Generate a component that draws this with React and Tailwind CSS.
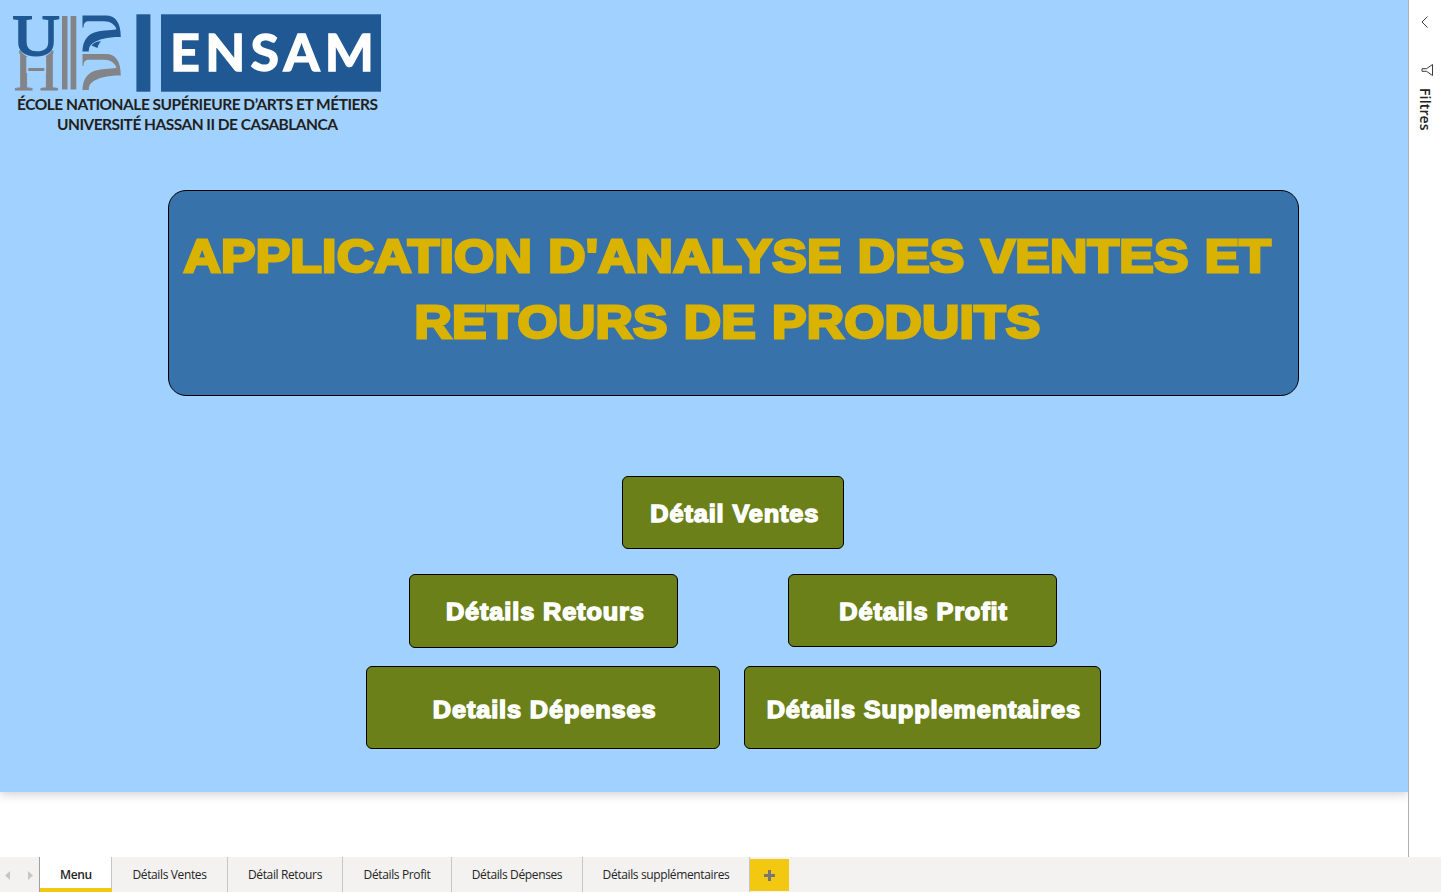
const ribbon =
  'M82.500 15.500 H106 C115 15.500 120.800 22 120.800 37 C108 36.800 98 39.500 93 43 C89.500 45.500 88.800 48 88.800 51.500 H82.500 C82.500 43 86 36 93 33 C101 29.800 110 30.500 116.500 29.200 C115 24.500 110.500 21.200 104 21.200 H88.500 C85 21.200 83.500 23.500 83.500 27.500 H82.500 Z';

function Logo() {
  return (
    <svg width="369" height="120" viewBox="13 14 369 120" role="img" aria-label="ENSAM">
      <defs>
        <clipPath id="lowerH">
          <path d="M13 80 H19.200 V49 Q24 58 36 58 Q48 58 53.300 49 V80 H60 V92 H13 Z" />
        </clipPath>
      </defs>
      <g clipPath="url(#lowerH)">
        <text x="13.500" y="89.500" textLength="46" lengthAdjust="spacingAndGlyphs" stroke="#838488" strokeWidth="0.800" className="fill-[#838488] font-['Liberation_Serif',serif] text-[60px]">H</text>
        <rect x="26.300" y="57" width="19.800" height="16" fill="#a0d1ff" />
        <rect x="28.300" y="68" width="16" height="3" fill="#838488" />
      </g>
      <text x="12.500" y="54.600" textLength="47" lengthAdjust="spacingAndGlyphs" stroke="#1f5893" strokeWidth="2" className="fill-[#1f5893] font-['Liberation_Serif',serif] text-[58px]">U</text>
      <g fill="#838488">
        <rect x="62" y="16" width="5.500" height="73.500" />
        <rect x="70.600" y="16" width="5.700" height="73.500" />
        <path d={ribbon} transform="translate(0 38.600)" />
      </g>
      <g fill="#1f5893">
        <path d={ribbon} />
        <path d="M91.500 45.500 C94 42.500 97 41.500 101 41.300 C99 43.500 98 45.500 97.500 48 Z" />
        <rect x="136.400" y="14.300" width="14" height="77.400" />
        <rect x="161" y="14.300" width="220" height="77.400" />
      </g>
      <text x="170" y="71" textLength="204" stroke="white" strokeWidth="1.400" className="fill-white font-[Lato,sans-serif] text-[52px] font-bold">ENSAM</text>
      <text x="17" y="110" textLength="361" className="fill-[#231f20] font-[Lato,sans-serif] text-[15.500px] font-bold">ÉCOLE NATIONALE SUPÉRIEURE D’ARTS ET MÉTIERS</text>
      <text x="57" y="130" textLength="281" className="fill-[#231f20] font-[Lato,sans-serif] text-[15.500px] font-bold">UNIVERSITÉ HASSAN II DE CASABLANCA</text>
    </svg>
  );
}

function NavButton({ label, className }) {
  return (
    <button className={`flex items-center justify-center whitespace-nowrap rounded-md border border-black bg-[#6b8019] pl-[3px] font-['Liberation_Sans',sans-serif] text-[23px] font-bold leading-8 tracking-[0.800px] text-white [-webkit-text-stroke:1.400px_white] ${className}`}>
      <span className="scale-x-110">{label}</span>
    </button>
  );
}

const tabs = [
  { label: 'Détails Ventes', size: 'w-[116px]' },
  { label: 'Détail Retours', size: 'w-[115px]' },
  { label: 'Détails Profit', size: 'w-[109px]' },
  { label: 'Détails Dépenses', size: 'w-[131px]' },
  { label: 'Détails supplémentaires', size: 'w-[167px]' },
];

export default function App() {
  return (
    <div className="flex h-[892px] w-[1441px] flex-col overflow-hidden bg-white font-['Open_Sans',sans-serif] text-[#252423]">
      <div className="flex h-[857px]">
        <div className="w-[1408px] shrink-0 overflow-hidden">
          <main className="flex h-[792px] flex-col bg-[#a0d1ff] shadow-[0_2px_10px_rgba(0,0,0,0.2)]">
            <div className="h-[190px] shrink-0 pl-[13px] pt-[14px]">
              <Logo />
            </div>
            <h1 className="ml-[168px] flex h-[206px] w-[1131px] shrink-0 flex-col items-center whitespace-nowrap rounded-[18px] border border-black bg-[#3872aa] pr-[12px] pt-[32px] font-['Liberation_Sans',sans-serif] text-[47px] font-bold leading-[66px] tracking-[0.150px] text-[#d9b300] [-webkit-text-stroke:2.800px_#d9b300] [word-spacing:1.500px]">
              <span className="scale-x-110">APPLICATION D'ANALYSE DES VENTES ET</span>
              <span className="scale-x-110">RETOURS DE PRODUITS</span>
            </h1>
            <nav className="flex flex-col pt-[80px]">
              <div className="flex pl-[622px]">
                <NavButton label="Détail Ventes" className="h-[73px] w-[222px] pt-[2px]" />
              </div>
              <div className="mt-[25px] flex items-start gap-[110px] pl-[409px]">
                <NavButton label="Détails Retours" className="h-[74px] w-[269px] pt-[2px]" />
                <NavButton label="Détails Profit" className="h-[73px] w-[269px] pt-[2px]" />
              </div>
              <div className="mt-[18px] flex gap-[24px] pl-[366px]">
                <NavButton label="Details Dépenses" className="h-[83px] w-[354px] pt-[4px]" />
                <NavButton label="Détails Supplementaires" className="h-[83px] w-[357px] pt-[4px]" />
              </div>
            </nav>
          </main>
        </div>
        <aside className="flex w-[33px] flex-col items-center border-l border-[#b3b0ad] pt-[16px]">
          <svg width="8" height="12" viewBox="0 0 8 12" fill="none" stroke="#3b3a39" strokeWidth="1">
            <path d="M6.500 .5 L1 6 L6.500 11.500" />
          </svg>
          <svg className="ml-[4px] mt-[36px]" width="12" height="12" viewBox="0 0 12 12" fill="none" stroke="#3b3a39" strokeWidth="1">
            <path d="M11.500 .5 V11.500 L5.500 7.300 H1 V4.700 H5.500 Z" />
          </svg>
          <span className="mt-[12px] text-[14px] font-semibold leading-5 tracking-[0.150px] [writing-mode:vertical-rl]">Filtres</span>
        </aside>
      </div>
      <footer className="flex h-[35px] bg-[#f3f2f1] text-[12px]">
        <div className="flex w-[40px] items-center justify-between border-r border-[#a19f9d] pl-[5px] pr-[6px] pt-[2px]">
          <svg width="5" height="9" viewBox="0 0 5 9" fill="#c8c6c4"><path d="M5 0 V9 L0 4.500 Z" /></svg>
          <svg width="5" height="9" viewBox="0 0 5 9" fill="#c8c6c4"><path d="M0 0 V9 L5 4.500 Z" /></svg>
        </div>
        <div className="flex w-[72px] items-center justify-center border-b-4 border-[#f2c811] bg-white pt-[4px] font-semibold tracking-[-0.350px] shadow-[inset_-1px_0_#c8c6c4]">Menu</div>
        {tabs.map((tab) => (
          <div key={tab.label} className={`flex items-center justify-center whitespace-nowrap border-r border-[#c8c6c4] tracking-[-0.370px] ${tab.size}`}>{tab.label}</div>
        ))}
        <div className="mt-[2px] flex h-[32px] w-[39px] items-center justify-center bg-[#f2c811]">
          <svg width="11" height="11" viewBox="0 0 11 11" fill="#767676"><path d="M4 0 H7 V4 H11 V7 H7 V11 H4 V7 H0 V4 H4 Z" /></svg>
        </div>
      </footer>
    </div>
  );
}
